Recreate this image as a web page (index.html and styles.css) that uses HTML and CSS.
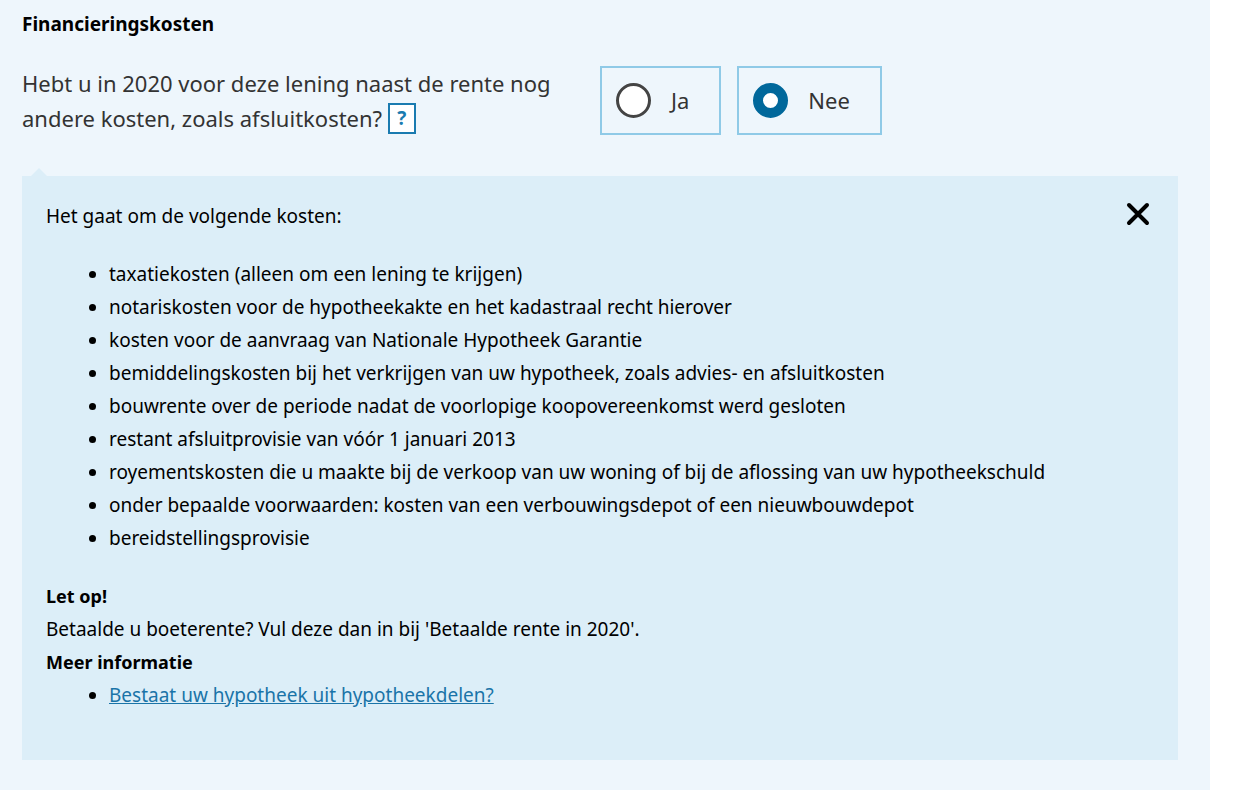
FILE: index.html
```
<!DOCTYPE html>
<html lang="nl">
<head>
    <meta charset="UTF-8">
    <meta name="viewport" content="width=device-width, initial-scale=1.0">
    <title>Financieringskosten</title>
    <link rel="stylesheet" href="styles.css">
</head>
<body>
    <main class="page">
        <h1>Financieringskosten</h1>

        <div class="question">
            <div class="question-text">
                <span id="question">Hebt u in 2020 voor deze lening naast de rente nog andere kosten, zoals afsluitkosten?</span>
                <button type="button" class="help" id="btnHelp" aria-controls="info">?</button>
            </div>
            <div class="answers" role="radiogroup" aria-labelledby="question">
                <label class="answer" for="ja">
                    <input type="radio" name="kosten" id="ja">
                    Ja
                </label>
                <label class="answer" for="nee">
                    <input type="radio" name="kosten" id="nee" checked>
                    Nee
                </label>
            </div>
        </div>

        <section class="info" id="info">
            <button type="button" class="close" id="btnClose" aria-label="Sluiten">
                <svg width="24" height="24" viewBox="0 0 24 24">
                    <path d="M3 3L21 21M21 3L3 21" stroke="#000" stroke-width="4" stroke-linecap="round"/>
                </svg>
            </button>
            <p>Het gaat om de volgende kosten:</p>
            <ul class="costs">
                <li>taxatiekosten (alleen om een lening te krijgen)</li>
                <li>notariskosten voor de hypotheekakte en het kadastraal recht hierover</li>
                <li>kosten voor de aanvraag van Nationale Hypotheek Garantie</li>
                <li>bemiddelingskosten bij het verkrijgen van uw hypotheek, zoals advies- en afsluitkosten</li>
                <li>bouwrente over de periode nadat de voorlopige koopovereenkomst werd gesloten</li>
                <li>restant afsluitprovisie van vóór 1 januari 2013</li>
                <li>royementskosten die u maakte bij de verkoop van uw woning of bij de aflossing van uw hypotheekschuld</li>
                <li>onder bepaalde voorwaarden: kosten van een verbouwingsdepot of een nieuwbouwdepot</li>
                <li>bereidstellingsprovisie</li>
            </ul>
            <h2>Let op!</h2>
            <p>Betaalde u boeterente? Vul deze dan in bij 'Betaalde rente in 2020'.</p>
            <h2>Meer informatie</h2>
            <ul>
                <li><a href="#hypotheekdelen">Bestaat uw hypotheek uit hypotheekdelen?</a></li>
            </ul>
        </section>
    </main>

    <script>
        const info = document.getElementById('info');

        document.getElementById('btnHelp').addEventListener('click', () => {
            info.hidden = !info.hidden;
        });

        document.getElementById('btnClose').addEventListener('click', () => {
            info.hidden = true;
        });
    </script>
</body>
</html>
```
FILE: styles.css
```
* {
    box-sizing: border-box;
}

body {
    margin: 0;
    background: #fff;
    color: #000;
    font-family: "Noto Sans", "Open Sans", sans-serif;
    font-size: 19px;
    line-height: 33px;
}

h1, h2, p, ul {
    margin: 0;
}

.page {
    min-height: 100vh;
    margin-right: 31px;
    padding: 8px 32px 30px 22px;
    background: #eef6fc;
}

h1 {
    font-size: 19px;
    line-height: 33px;
}

.question {
    display: flex;
    align-items: flex-start;
    gap: 48px;
    margin-top: 25px;
    color: #333;
    font-size: 22px;
    line-height: 35px;
}

.question-text {
    flex: 0 1 530px;
}

.help {
    width: 28px;
    height: 31px;
    margin-top: 2px;
    padding: 0;
    border: 2px solid #1a7bb0;
    background: #fff;
    color: #1a7bb0;
    font: bold 19px/27px "Noto Sans", sans-serif;
    vertical-align: top;
    cursor: pointer;
}

.answers {
    display: flex;
    gap: 16px;
}

.answer {
    display: flex;
    align-items: center;
    gap: 20px;
    height: 69px;
    padding: 0 30px 0 14px;
    border: 2px solid #8fcae7;
    cursor: pointer;
}

.answer input {
    appearance: none;
    width: 35px;
    height: 35px;
    margin: 0;
    border: 3px solid #444;
    border-radius: 50%;
    background: #fff;
}

.answer input:checked {
    border: 10px solid #01689b;
}

.info {
    position: relative;
    margin-top: 40px;
    padding: 24px 24px 48px;
    background: #dceef8;
}

/* little arrow on top of the panel */
.info::before {
    content: "";
    position: absolute;
    left: 9px;
    bottom: 100%;
    border: 8px solid transparent;
    border-top-width: 0;
    border-bottom-color: #dceef8;
}

.info h2 {
    font-size: 18px;
    line-height: 33px;
}

.info ul {
    padding-left: 63px;
}

.info .costs {
    margin: 25px 0;
}

.info a {
    color: #1a74a8;
}

.close {
    position: absolute;
    top: 26px;
    right: 28px;
    width: 24px;
    height: 24px;
    padding: 0;
    border: 0;
    background: none;
    cursor: pointer;
}

.close svg {
    display: block;
}
```
